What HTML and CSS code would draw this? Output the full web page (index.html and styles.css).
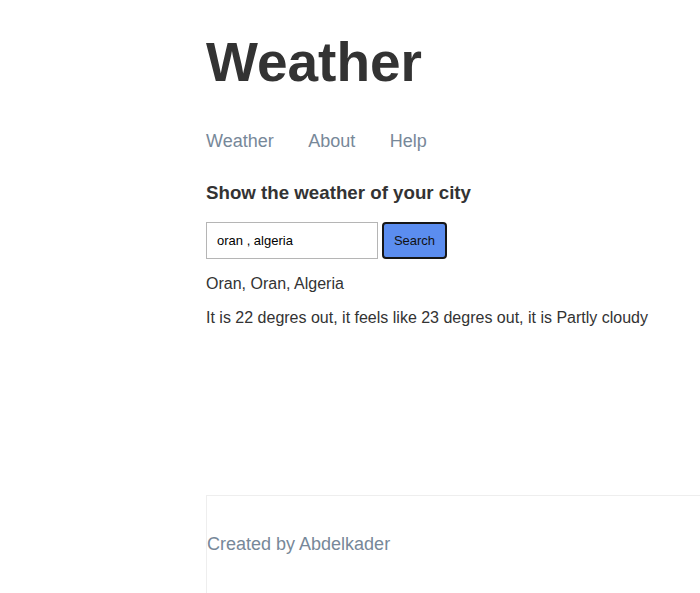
FILE: index.html
```html
<!DOCTYPE html>
<html>
<head>
<meta charset="utf-8">
<title>Weather</title>
<link rel="stylesheet" href="styles.css">
</head>
<body>
<div class="page">
  <header class="header">
    <h1 class="title">Weather</h1>
    <nav class="nav">
      <a class="nav-link" href="#">Weather</a>
      <a class="nav-link" href="#">About</a>
      <a class="nav-link" href="#">Help</a>
    </nav>
  </header>
  <main class="main">
    <h2 class="subtitle">Show the weather of your city</h2>
    <form class="search">
      <input class="search-input" type="text" value="oran , algeria">
      <button class="search-btn" type="button">Search</button>
    </form>
    <p class="location">Oran, Oran, Algeria</p>
    <p class="forecast">It is 22 degres out, it feels like 23 degres out, it is Partly cloudy</p>
  </main>
  <footer class="footer">
    <p class="footer-text">Created by Abdelkader</p>
  </footer>
</div>
</body>
</html>
```

FILE: styles.css
```css
html, body {
  margin: 0;
  padding: 0;
  background: #ffffff;
}
body {
  font-family: "Liberation Sans", Arial, sans-serif;
  color: #333333;
  line-height: 1.15;
  overflow: hidden;
}
.page {
  padding: 31px 0 0 206px;
  min-height: 562px;
  display: flex;
  flex-direction: column;
}
.title {
  margin: 0;
  font-size: 55px;
  font-weight: bold;
  line-height: 1.15;
}
.nav {
  margin-top: 37px;
  display: flex;
  gap: 34.5px;
  font-size: 18px;
}
.nav-link {
  color: #778899;
  text-decoration: none;
}
.main {
  height: 343px;
}
.subtitle {
  margin: 30px 0 0;
  font-size: 18.72px;
  font-weight: bold;
}
.search {
  margin-top: 19px;
  display: flex;
  gap: 4px;
}
.search-input {
  box-sizing: border-box;
  width: 172px;
  height: 37px;
  margin: 0;
  padding: 0 10px;
  border: 1px solid #b5b5b5;
  border-radius: 0;
  font-family: "Liberation Sans", Arial, sans-serif;
  font-size: 13px;
  color: #000000;
  outline: none;
}
.search-btn {
  box-sizing: border-box;
  width: 65px;
  height: 37px;
  margin: 0;
  padding: 0;
  background: #5b8def;
  border: 2px solid #161616;
  border-radius: 4px;
  font-family: "Liberation Sans", Arial, sans-serif;
  font-size: 13px;
  color: #111111;
}
.location {
  margin: 16px 0 0;
  font-size: 16px;
}
.forecast {
  margin: 15px 0 0;
  font-size: 16px;
}
.footer {
  flex: 1;
  border-top: 1px solid #eeeeee;
  border-left: 1px solid #eeeeee;
  padding-top: 38px;
}
.footer-text {
  margin: 0;
  font-size: 18px;
  color: #778899;
}
```
